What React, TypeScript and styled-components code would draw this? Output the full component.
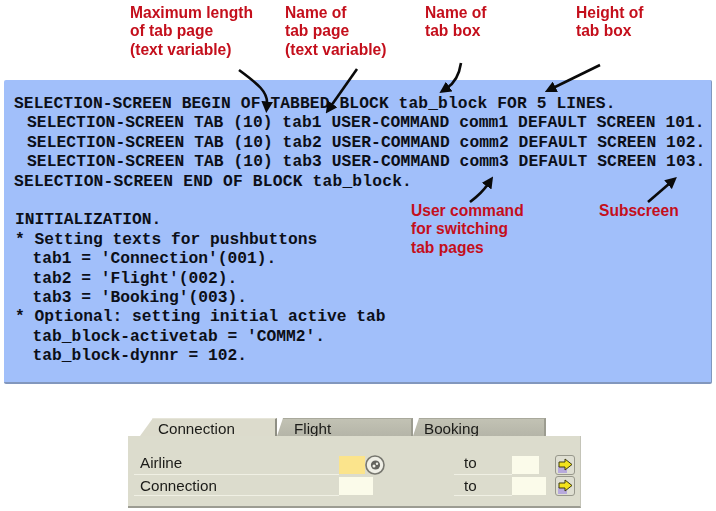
import React from 'react';
import styled, { createGlobalStyle } from 'styled-components';

const GlobalStyle = createGlobalStyle`
  html, body {
    margin: 0;
    padding: 0;
    background: #fff;
  }
`;

const Page = styled.div`
  position: relative;
  width: 716px;
  height: 511px;
  overflow: hidden;
  filter: blur(0.35px);
`;

const CalloutRow = styled.header`
  display: flex;
  height: 80px;
  padding: 4px 0 0 130px;
  box-sizing: border-box;
`;

const Callout = styled.div<{ $width: number }>`
  width: ${({ $width }) => $width}px;
  flex: none;
  font: bold 15.6px/18.4px 'Liberation Sans', Arial, sans-serif;
  color: #c40f1c;
  white-space: pre;
`;

const Panel = styled.section`
  position: relative;
  width: 708px;
  height: 304px;
  margin-left: 4px;
  padding: 14px 0 0 10px;
  box-sizing: border-box;
  background: #a1bffa;
  border-right: 1px solid #8297bd;
  border-bottom: 2px solid #8297bd;
  border-radius: 2px;
`;

const CodeLine = styled.div<{ $indent?: number; $spread?: number }>`
  height: 19.4px;
  padding-left: ${({ $indent }) => $indent ?? 0}px;
  font: bold 16.25px/19.4px 'Liberation Mono', 'Courier New', monospace;
  letter-spacing: ${({ $spread }) => $spread ?? 0}px;
  color: #0c0f18;
  white-space: pre;
`;

const PanelNote = styled(Callout)<{ $left: number }>`
  position: absolute;
  left: ${({ $left }) => $left}px;
  top: 122px;
`;

const ArrowLayer = styled.svg`
  position: absolute;
  left: 0;
  top: 0;
  pointer-events: none;
`;

const TabBox = styled.section`
  width: 453px;
  margin: 34px 0 0 128px;
  font: 15.2px/18px 'Liberation Sans', Arial, sans-serif;
  color: #1b1b18;
`;

const TabStrip = styled.div`
  display: flex;
  height: 18px;
  padding-left: 12px;
`;

const Tab = styled.div<{ $width: number; $active?: boolean; $textLeft: number }>`
  width: ${({ $width }) => $width}px;
  height: 18px;
  box-sizing: border-box;
  padding-left: ${({ $textLeft }) => $textLeft}px;
  line-height: 20px;
  background: ${({ $active }) =>
    $active ? '#dcdbcc' : 'linear-gradient(#c2c2b4, #b5b5a8)'};
  border-top: 1px solid ${({ $active }) => ($active ? '#e6e5d9' : '#a9a99c')};
  border-right: 2px solid ${({ $active }) => ($active ? '#8f8f84' : '#9c9c90')};
  clip-path: ${({ $active }) =>
    $active
      ? 'polygon(13px 0, 100% 0, 100% 100%, 0 100%)'
      : 'polygon(6px 0, 100% 0, 100% 100%, 0 100%)'};
`;

const TabBody = styled.div`
  height: 72px;
  box-sizing: border-box;
  padding: 20px 6px 0;
  background: #dcdccd;
  border-bottom: 2px solid #9c9c92;
  border-right: 1px solid #c4c4b8;
`;

const FieldRow = styled.div`
  display: grid;
  grid-template-columns: 205px 115px 58px 43px 20px;
  height: 21px;
`;

const FieldLabel = styled.div<{ $indent: number; $textHeight: number }>`
  height: 18px;
  padding-left: ${({ $indent }) => $indent}px;
  line-height: ${({ $textHeight }) => $textHeight}px;
  border-bottom: 1px solid #f0f0e4;
`;

const FieldCell = styled.div`
  display: flex;
  align-items: flex-start;
`;

const Input = styled.div<{ $width: number; $required?: boolean }>`
  width: ${({ $width }) => $width}px;
  height: 18px;
  background: ${({ $required }) => ($required ? '#fbe48c' : '#fbfbea')};
`;

const HelpButton = styled.svg`
  display: block;
  margin-top: -1px;
`;

const PushButton = styled.div`
  width: 20px;
  height: 20px;
  margin-top: -1px;
  box-sizing: border-box;
  display: flex;
  align-items: center;
  justify-content: center;
  background: #dfdfd2;
  border: 1.5px solid #98988c;
  border-radius: 3px;
`;

const code: { text: string; indent?: number; spread?: number }[] = [
  { text: 'SELECTION-SCREEN BEGIN OF TABBED BLOCK tab_block FOR 5 LINES.', spread: 0.11 },
  { text: 'SELECTION-SCREEN TAB (10) tab1 USER-COMMAND comm1 DEFAULT SCREEN 101.', indent: 13, spread: 0.07 },
  { text: 'SELECTION-SCREEN TAB (10) tab2 USER-COMMAND comm2 DEFAULT SCREEN 102.', indent: 13, spread: 0.08 },
  { text: 'SELECTION-SCREEN TAB (10) tab3 USER-COMMAND comm3 DEFAULT SCREEN 103.', indent: 13, spread: 0.08 },
  { text: 'SELECTION-SCREEN END OF BLOCK tab_block.', spread: 0.2 },
  { text: ' ' },
  { text: 'INITIALIZATION.', indent: 1 },
  { text: '* Setting texts for pushbuttons', indent: 1 },
  { text: "tab1 = 'Connection'(001).", indent: 18.5 },
  { text: "tab2 = 'Flight'(002).", indent: 18.5 },
  { text: "tab3 = 'Booking'(003).", indent: 18.5 },
  { text: '* Optional: setting initial active tab', indent: 1 },
  { text: "tab_block-activetab = 'COMM2'.", indent: 18.5 },
  { text: 'tab_block-dynnr = 102.', indent: 18.5 },
];

const arrows = [
  'M239 70 C258 84 268 92 267 104',
  'M357 69 L331 106',
  'M461 63 C459 76 453 84 447 88',
  'M600 65 L553 88',
  'M470 202 C478 196 484 190 488 184',
  'M648 202 L670 183',
];

const SearchIcon = () => (
  <HelpButton width="20" height="20" viewBox="0 0 20 20">
    <circle cx="10" cy="10" r="9" fill="#efefe6" stroke="#77776f" strokeWidth="1.6" />
    <circle cx="10.5" cy="10" r="4.6" fill="#63635d" />
    <circle cx="9" cy="11" r="1.5" fill="#efefe6" />
    <circle cx="12" cy="8.8" r="1.2" fill="#efefe6" />
  </HelpButton>
);

const MultiIcon = () => (
  <svg width="16" height="16" viewBox="0 0 16 16">
    <rect x="1" y="9" width="9" height="7" fill="#b7a9dc" />
    <path d="M2 5 H8 V2 L15 7.5 L8 13 V10 H2 Z" fill="#f2e21c" stroke="#3d3a10" strokeWidth="1" />
  </svg>
);

const rows = [
  { label: 'Airline', width: 26, required: true, toWidth: 27, textHeight: 14 },
  { label: 'Connection', width: 34, required: false, toWidth: 34, textHeight: 17 },
];

export default function App() {
  return (
    <Page>
      <GlobalStyle />
      <CalloutRow>
        <Callout $width={155}>{'Maximum length\nof tab page\n(text variable)'}</Callout>
        <Callout $width={140}>{'Name of\ntab page\n(text variable)'}</Callout>
        <Callout $width={151}>{'Name of\ntab box'}</Callout>
        <Callout $width={100}>{'Height of\ntab box'}</Callout>
      </CalloutRow>

      <Panel>
        {code.map((line, i) => (
          <CodeLine key={i} $indent={line.indent} $spread={line.spread}>
            {line.text}
          </CodeLine>
        ))}
        <PanelNote $width={130} $left={407}>{'User command\nfor switching\ntab pages'}</PanelNote>
        <PanelNote $width={90} $left={595}>Subscreen</PanelNote>
      </Panel>

      <TabBox>
        <TabStrip>
          <Tab $active $width={137} $textLeft={18}>Connection</Tab>
          <Tab $width={136} $textLeft={17}>Flight</Tab>
          <Tab $width={133} $textLeft={11}>Booking</Tab>
        </TabStrip>
        <TabBody>
          {rows.map((row) => (
            <FieldRow key={row.label}>
              <FieldLabel $indent={6} $textHeight={row.textHeight}>{row.label}</FieldLabel>
              <FieldCell>
                <Input $width={row.width} $required={row.required} />
                {row.required && <SearchIcon />}
              </FieldCell>
              <FieldLabel $indent={10} $textHeight={row.textHeight}>to</FieldLabel>
              <FieldCell>
                <Input $width={row.toWidth} />
              </FieldCell>
              <PushButton>
                <MultiIcon />
              </PushButton>
            </FieldRow>
          ))}
        </TabBody>
      </TabBox>

      <ArrowLayer width="716" height="511" viewBox="0 0 716 511">
        <defs>
          <marker id="head" markerWidth="4.5" markerHeight="4.5" refX="1" refY="2.25" orient="auto">
            <path d="M0 0 L4.5 2.25 L0 4.5 Z" fill="#0a0a0a" />
          </marker>
        </defs>
        {arrows.map((d) => (
          <path key={d} d={d} fill="none" stroke="#0a0a0a" strokeWidth="2.6" markerEnd="url(#head)" />
        ))}
      </ArrowLayer>
    </Page>
  );
}
